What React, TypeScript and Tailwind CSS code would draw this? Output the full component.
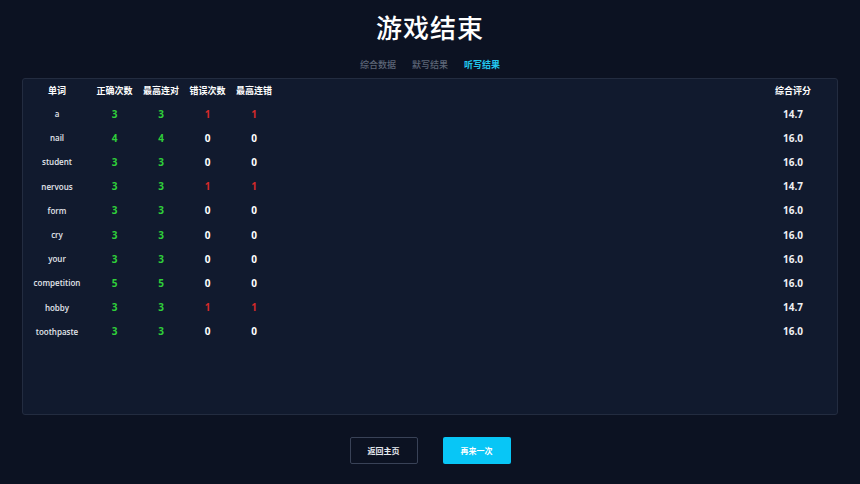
const rows = [
  { word: "a", right: 3, streak: 3, wrong: 1, wStreak: 1, score: "14.7" },
  { word: "nail", right: 4, streak: 4, wrong: 0, wStreak: 0, score: "16.0" },
  { word: "student", right: 3, streak: 3, wrong: 0, wStreak: 0, score: "16.0" },
  { word: "nervous", right: 3, streak: 3, wrong: 1, wStreak: 1, score: "14.7" },
  { word: "form", right: 3, streak: 3, wrong: 0, wStreak: 0, score: "16.0" },
  { word: "cry", right: 3, streak: 3, wrong: 0, wStreak: 0, score: "16.0" },
  { word: "your", right: 3, streak: 3, wrong: 0, wStreak: 0, score: "16.0" },
  { word: "competition", right: 5, streak: 5, wrong: 0, wStreak: 0, score: "16.0" },
  { word: "hobby", right: 3, streak: 3, wrong: 1, wStreak: 1, score: "14.7" },
  { word: "toothpaste", right: 3, streak: 3, wrong: 0, wStreak: 0, score: "16.0" },
];

const GRID = "grid grid-cols-[68px_47px_46px_47px_46px_1fr_88px] items-center";

function Bad({ n }: { n: number }) {
  return <span className={n > 0 ? "text-[#d42a2a]" : "text-white"}>{n}</span>;
}

export default function App() {
  return (
    <div
      className="flex h-[484px] w-[860px] flex-col items-center overflow-hidden bg-[#0c1222] text-white"
      style={{ fontFamily: '"Open Sans", "Noto Sans CJK SC", sans-serif' }}
    >
      <h1 className="mt-[10px] text-[26px] font-medium leading-[36px] tracking-[1px]">游戏结束</h1>

      {/* tabs */}
      <div className="mt-[12px] flex gap-[16px] text-[9px] font-medium leading-[14px]">
        <span className="text-[#5d6677]">综合数据</span>
        <span className="text-[#5d6677]">默写结果</span>
        <span className="font-bold text-[#22c8ee]">听写结果</span>
      </div>

      {/* results panel */}
      <div className="mt-[6px] h-[337px] w-[816px] rounded-[3px] border border-[#232c40] bg-[#111a2e]">
        <div className={`${GRID} h-[23px] text-[9px] font-bold`}>
          <span className="text-center">单词</span>
          <span className="text-center">正确次数</span>
          <span className="text-center">最高连对</span>
          <span className="text-center">错误次数</span>
          <span className="text-center">最高连错</span>
          <span />
          <span className="text-center">综合评分</span>
        </div>
        {rows.map((r) => (
          <div key={r.word} className={`${GRID} h-[24.2px] text-[10px] font-bold`}>
            <span className="text-center text-[8px] font-semibold text-[#e3e6ec]">{r.word}</span>
            <span className="text-center text-[#2fcf3a]">{r.right}</span>
            <span className="text-center text-[#2fcf3a]">{r.streak}</span>
            <span className="text-center">
              <Bad n={r.wrong} />
            </span>
            <span className="text-center">
              <Bad n={r.wStreak} />
            </span>
            <span />
            <span className="text-center text-[#eef0f4]">{r.score}</span>
          </div>
        ))}
      </div>

      {/* actions */}
      <div className="mt-[22px] flex gap-[25px]">
        <button className="h-[27px] w-[68px] rounded-[2px] border border-[#394257] text-[8px] font-bold text-[#e6e9ef]">
          返回主页
        </button>
        <button className="h-[27px] w-[68px] rounded-[2px] bg-[#08c6f6] text-[8px] font-bold text-white">
          再来一次
        </button>
      </div>
    </div>
  );
}
